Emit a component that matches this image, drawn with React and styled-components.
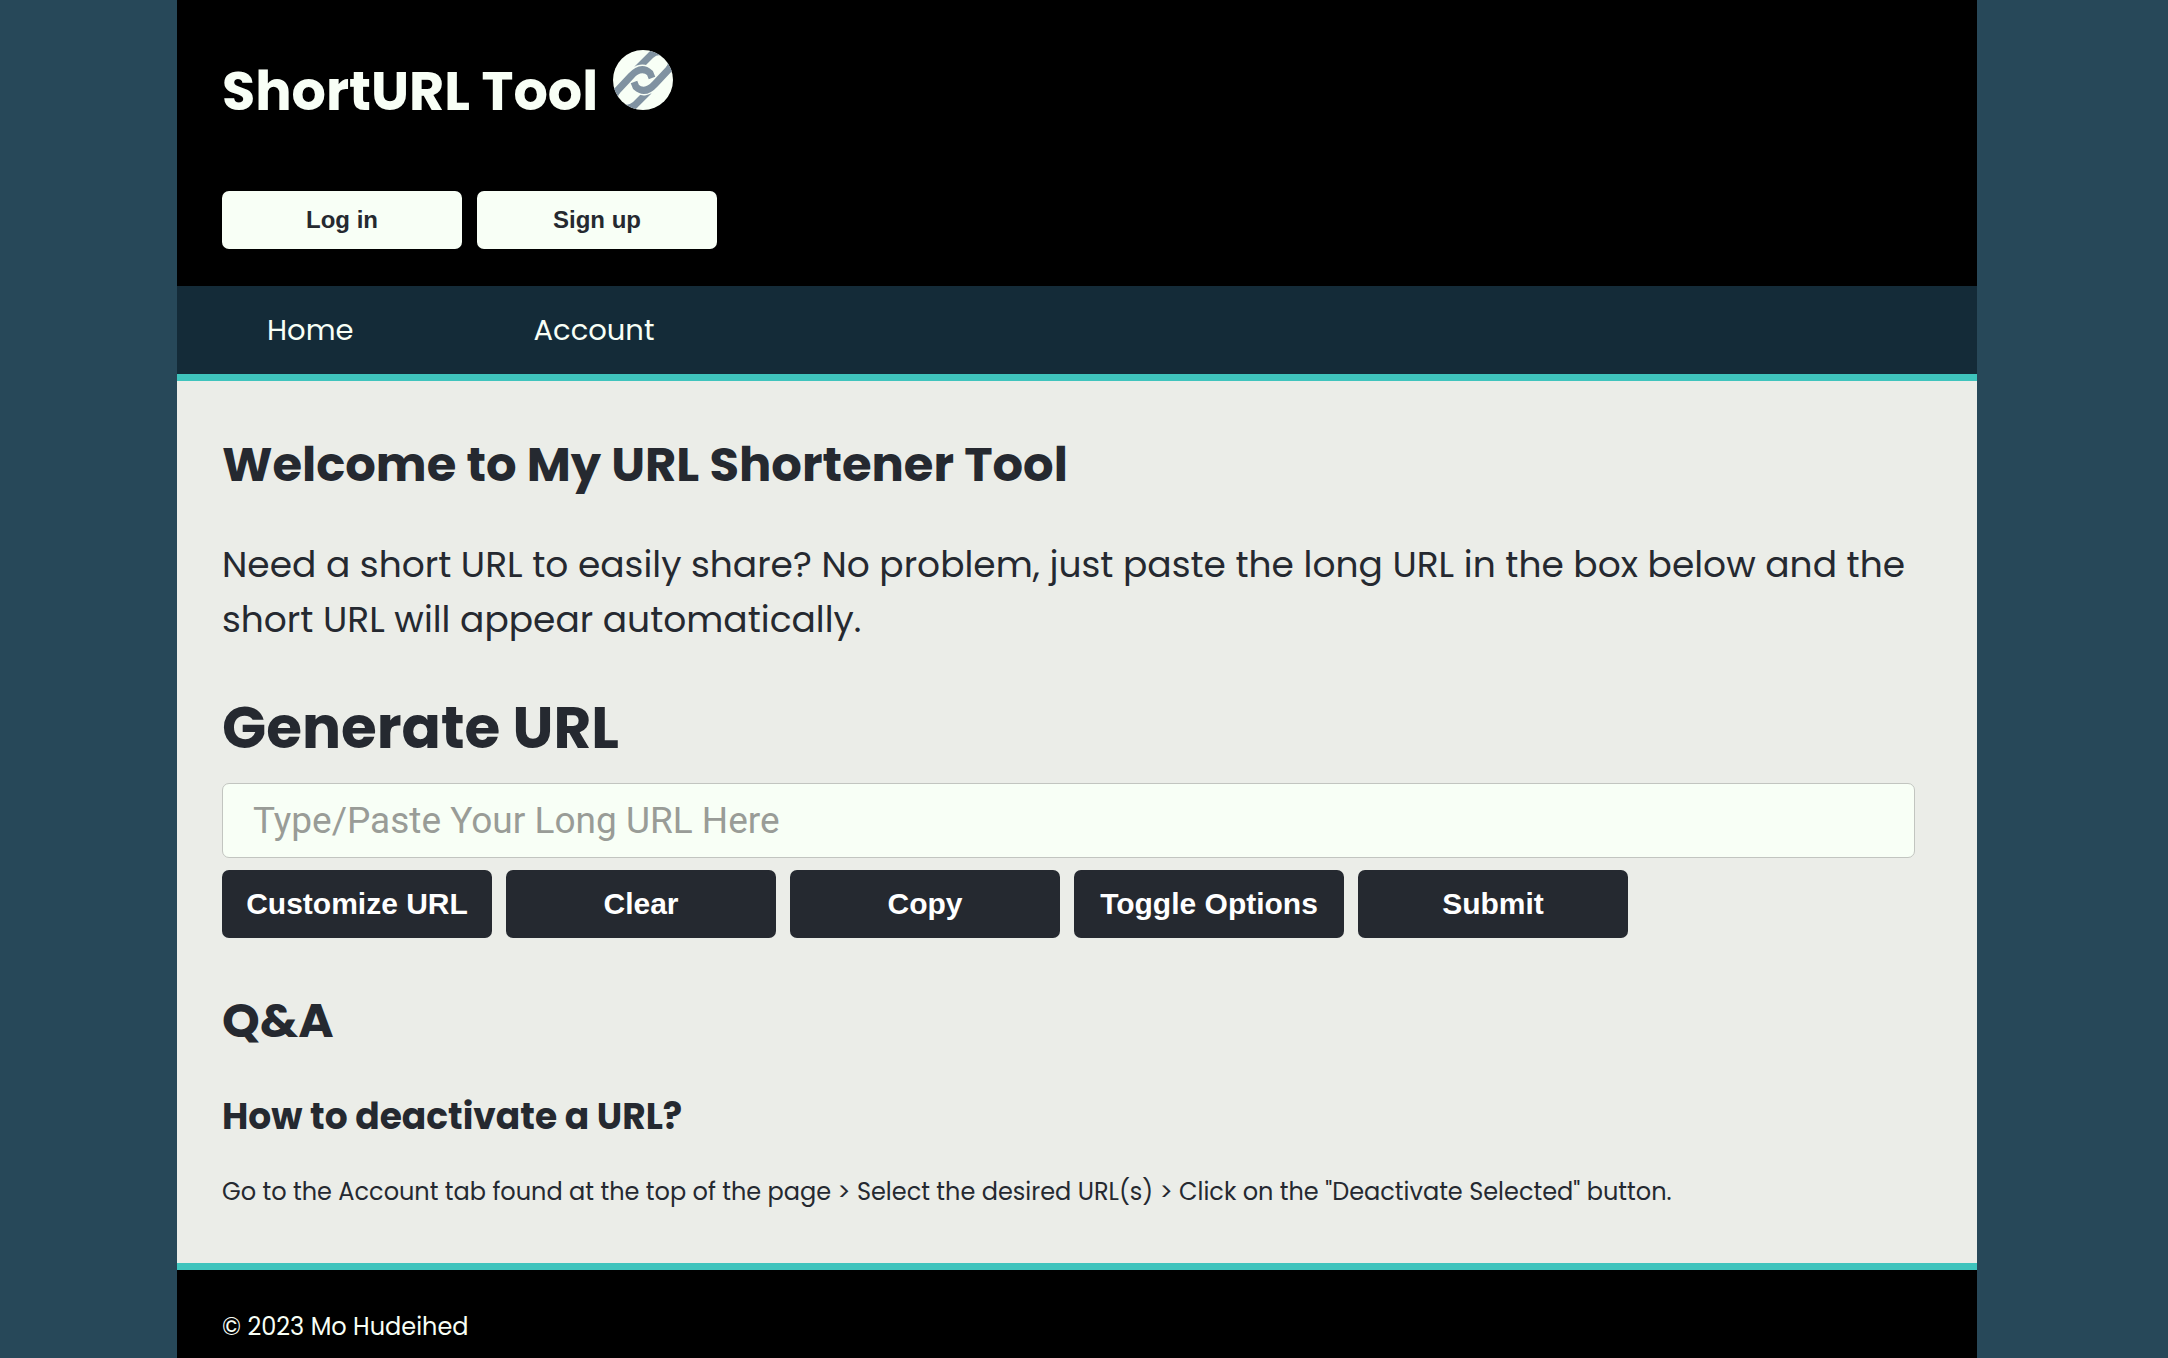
import React from "react";
import styled, { createGlobalStyle } from "styled-components";

const color = {
  page: "#274859",
  black: "#000000",
  nav: "#142b38",
  accent: "#3fc4bd",
  panel: "#ebede8",
  light: "#f8fff6",
  ink: "#252930",
  placeholder: "#999c97",
  line: "#c2c5c0",
};

const GlobalStyle = createGlobalStyle`
  * { box-sizing: border-box; }
  body {
    margin: 0;
    padding-right: 14px;
    background: ${color.page};
    color: ${color.ink};
    font-family: Poppins, Inter, sans-serif;
    font-size: 24px;
  }
`;

const Shell = styled.div`
  display: flex;
  flex-direction: column;
  max-width: 1800px;
  min-height: 100vh;
  margin: 0 auto;
`;

const Header = styled.header`
  padding: 45px 45px 37px;
  background: ${color.black};
`;

const Brand = styled.h1`
  display: flex;
  align-items: flex-start;
  gap: 15px;
  margin: 0 0 54px;
  color: ${color.light};
  font-size: 54px;
  font-weight: 700;
  line-height: 92px;
`;

const BrandIcon = styled.svg`
  width: 60px;
  height: 60px;
  margin-top: 5px;
`;

const ButtonRow = styled.div`
  display: flex;
  flex-wrap: wrap;
  gap: ${(p) => p.$gap}px;
`;

const Button = styled.button`
  width: 240px;
  height: 58px;
  padding: 0;
  border: 0;
  border-radius: 7px;
  background: ${color.light};
  color: ${color.ink};
  font: 700 24px "Liberation Sans", Arial, sans-serif;
  cursor: pointer;
`;

const ActionButton = styled(Button)`
  width: 270px;
  height: 68px;
  background: ${color.ink};
  color: #ffffff;
  font-size: 30px;
`;

const Nav = styled.nav`
  display: flex;
  border-bottom: 7px solid ${color.accent};
  background: ${color.nav};
`;

const NavLink = styled.a`
  padding: 0 90px;
  color: ${color.light};
  font-size: 29px;
  line-height: 88px;
  text-decoration: none;
`;

const Main = styled.main`
  padding: 46px 45px 53px;
  background: ${color.panel};
`;

const SectionTitle = styled.h2`
  margin: 0;
  font-size: 48px;
  font-weight: 700;
  line-height: 75px;
`;

const Lead = styled.p`
  margin: 35px 0 36px;
  font-size: 36px;
  line-height: 55px;
`;

const FormTitle = styled.label`
  display: block;
  margin-bottom: 10px;
  font-size: 58px;
  font-weight: 700;
  line-height: 90px;
`;

const UrlInput = styled.input`
  display: block;
  width: 99%;
  height: 75px;
  margin-bottom: 12px;
  padding: 0 30px;
  border: 1px solid ${color.line};
  border-radius: 7px;
  background: ${color.light};
  color: ${color.ink};
  font: 37px Roboto, sans-serif;

  &::placeholder {
    color: ${color.placeholder};
    opacity: 1;
  }
`;

const Faq = styled.section`
  margin-top: 45px;
`;

const Question = styled.h3`
  margin: 31px 0 30px;
  font-size: 36px;
  font-weight: 700;
  line-height: 55px;
`;

const Answer = styled.p`
  margin: 0;
  line-height: 36px;
`;

const Footer = styled.footer`
  flex: 1;
  padding: 39px 45px 13px;
  border-top: 7px solid ${color.accent};
  background: ${color.black};
  color: ${color.light};
`;

const Copyright = styled.p`
  margin: 0;
  line-height: 36px;
`;

function ChainIcon() {
  return (
    <BrandIcon viewBox="0 0 60 60" aria-hidden="true">
      <defs>
        <clipPath id="disc">
          <circle cx="30" cy="30" r="30" />
        </clipPath>
      </defs>
      <circle cx="30" cy="30" r="30" fill={color.light} />
      <g clipPath="url(#disc)" fill="none" stroke="#8092a1" strokeWidth="7">
        <path d="M24 19 L38 5 Q46 -2 54 5 Q62 12 56 19" />
        <path d="M36 41 L22 55 Q14 62 6 55 Q-2 48 4 41" />
        <g stroke={color.light} strokeWidth="10">
          <path d="M18 26 Q28 15 37 23" />
          <path d="M42 34 Q32 45 23 37" />
        </g>
        <path d="M3 42 L18 26 Q28 15 37 23 L39 28" />
        <path d="M57 18 L42 34 Q32 45 23 37 L21 32" />
      </g>
    </BrandIcon>
  );
}

const actions = ["Customize URL", "Clear", "Copy", "Toggle Options"];

export default function App() {
  return (
    <>
      <GlobalStyle />
      <Shell>
        <Header>
          <Brand>
            ShortURL Tool
            <ChainIcon />
          </Brand>
          <ButtonRow $gap={15}>
            <Button type="button">Log in</Button>
            <Button type="button">Sign up</Button>
          </ButtonRow>
        </Header>
        <Nav>
          <NavLink href="#home">Home</NavLink>
          <NavLink href="#account">Account</NavLink>
        </Nav>
        <Main>
          <SectionTitle>Welcome to My URL Shortener Tool</SectionTitle>
          <Lead>
            Need a short URL to easily share? No problem, just paste the long
            URL in the box below and the short URL will appear automatically.
          </Lead>
          <form onSubmit={(e) => e.preventDefault()}>
            <FormTitle htmlFor="long-url">Generate URL</FormTitle>
            <UrlInput
              id="long-url"
              type="text"
              placeholder="Type/Paste Your Long URL Here"
            />
            <ButtonRow $gap={14}>
              {actions.map((label) => (
                <ActionButton key={label} type="button">
                  {label}
                </ActionButton>
              ))}
              <ActionButton type="submit">Submit</ActionButton>
            </ButtonRow>
          </form>
          <Faq>
            <SectionTitle>Q&amp;A</SectionTitle>
            <Question>How to deactivate a URL?</Question>
            <Answer>
              Go to the Account tab found at the top of the page &gt; Select the
              desired URL(s) &gt; Click on the "Deactivate Selected" button.
            </Answer>
          </Faq>
        </Main>
        <Footer>
          <Copyright>© 2023 Mo Hudeihed</Copyright>
        </Footer>
      </Shell>
    </>
  );
}
